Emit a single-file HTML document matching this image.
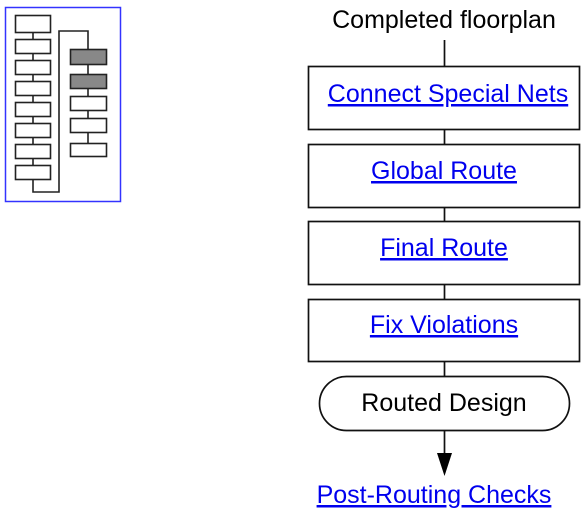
<!DOCTYPE html>
<html><head><style>
html,body{margin:0;padding:0;background:#fff;width:584px;height:513px;overflow:hidden}
svg text{font-family:"Liberation Sans",Arial,sans-serif;font-size:25px}
</style></head><body>
<svg width="584" height="513" xmlns="http://www.w3.org/2000/svg">
<rect x="5.5" y="7.5" width="115" height="194" fill="none" stroke="#3333ff" stroke-width="1.5"/>
<g fill="#fff" stroke="#222" stroke-width="1.6">
<path d="M33 32V39M33 53V60M33 74V81M33 95V103M33 116V123M33 137V144M33 158V165M33 180V192H59V31H88V49M88 64V74M88 88V96M88 110V118M88 132V143" fill="none"/>
<rect x="15.5" y="15.5" width="35" height="17"/>
<rect x="15.5" y="39.5" width="35" height="14"/>
<rect x="15.5" y="60.5" width="35" height="14"/>
<rect x="15.5" y="81.5" width="35" height="14"/>
<rect x="15.5" y="102.5" width="35" height="14"/>
<rect x="15.5" y="123.5" width="35" height="14"/>
<rect x="15.5" y="144.5" width="35" height="14"/>
<rect x="15.5" y="165.5" width="35" height="14"/>
<rect x="70.5" y="49.5" width="36" height="15" fill="#888"/>
<rect x="70.5" y="74.5" width="36" height="14" fill="#888"/>
<rect x="70.5" y="96.5" width="36" height="14"/>
<rect x="70.5" y="118.5" width="36" height="14"/>
<rect x="70.5" y="143.5" width="36" height="13"/>
</g>
<g stroke="#111" stroke-width="1.7" fill="none">
<path d="M444.5 40V66M444.5 129V144M444.5 207V222M444.5 284V299M444.5 361V376M444.5 431V455"/>
<rect x="308.5" y="66.5" width="271" height="63"/>
<rect x="308.5" y="144.5" width="271" height="63"/>
<rect x="308.5" y="221.5" width="271" height="63"/>
<rect x="308.5" y="299.5" width="271" height="62"/>
<rect x="319.5" y="376.5" width="250" height="54" rx="27"/>
</g>
<path d="M437 453H452L444.5 476Z" fill="#000"/>
<text x="444" y="28" text-anchor="middle" fill="#000">Completed floorplan</text>
<g fill="#0000ee" text-decoration="underline" text-anchor="middle">
<text x="448" y="102">Connect Special Nets</text>
<text x="444" y="179">Global Route</text>
<text x="444" y="256">Final Route</text>
<text x="444" y="333">Fix Violations</text>
<text x="434" y="503">Post-Routing Checks</text>
</g>
<text x="444" y="411" text-anchor="middle" fill="#000">Routed Design</text>
</svg>
</body></html>
